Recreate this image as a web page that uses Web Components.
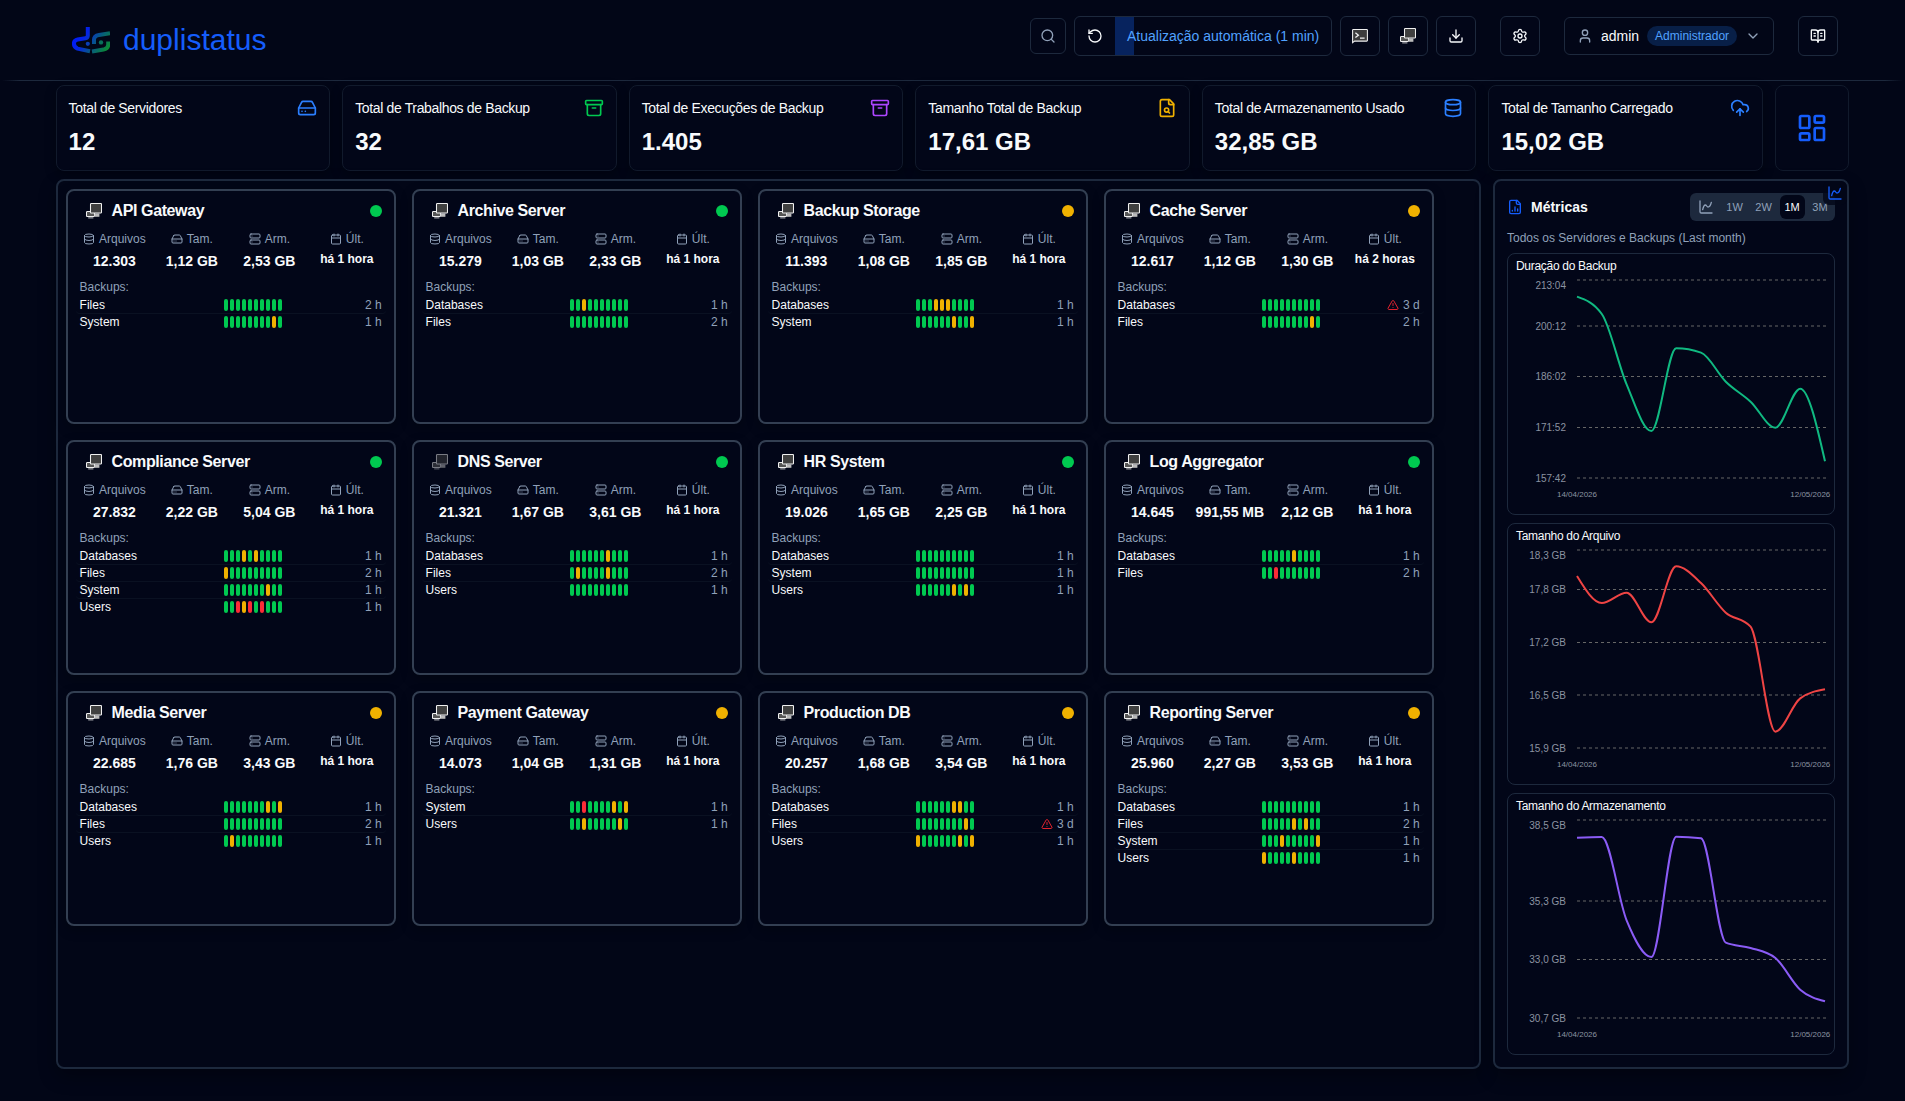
<!DOCTYPE html>
<html lang="pt-BR">
<head>
<meta charset="utf-8">
<title>duplistatus</title>
<style>
html,body{margin:0;height:100%;background:#020617}
body{font-family:"Liberation Sans",Arial,sans-serif;color:#f8fafc;overflow:hidden}
</style>
</head>
<body>
<dashboard-app></dashboard-app>
<script>
const ICONS = {
  search:'<circle cx="11" cy="11" r="8"/><path d="m21 21-4.3-4.3"/>',
  rotate:'<path d="M3 12a9 9 0 1 0 9-9 9.75 9.75 0 0 0-6.74 2.74L3 8"/><path d="M3 3v5h5"/>',
  download:'<path d="M12 15V3"/><path d="M21 15v4a2 2 0 0 1-2 2H5a2 2 0 0 1-2-2v-4"/><path d="m7 10 5 5 5-5"/>',
  settings:'<path d="M9.671 4.136a2.34 2.34 0 0 1 4.659 0 2.34 2.34 0 0 0 3.319 1.915 2.34 2.34 0 0 1 2.33 4.033 2.34 2.34 0 0 0 0 3.831 2.34 2.34 0 0 1-2.33 4.033 2.34 2.34 0 0 0-3.319 1.915 2.34 2.34 0 0 1-4.659 0 2.34 2.34 0 0 0-3.32-1.915 2.34 2.34 0 0 1-2.33-4.033 2.34 2.34 0 0 0 0-3.831A2.34 2.34 0 0 1 6.35 6.051a2.34 2.34 0 0 0 3.319-1.915"/><circle cx="12" cy="12" r="3"/>',
  user:'<path d="M19 21v-2a4 4 0 0 0-4-4H9a4 4 0 0 0-4 4v2"/><circle cx="12" cy="7" r="4"/>',
  chevron:'<path d="m6 9 6 6 6-6"/>',
  book:'<path d="M12 7v14"/><path d="M16 12h2"/><path d="M16 8h2"/><path d="M3 18a1 1 0 0 1-1-1V4a1 1 0 0 1 1-1h5a4 4 0 0 1 4 4 4 4 0 0 1 4-4h5a1 1 0 0 1 1 1v13a1 1 0 0 1-1 1h-6a3 3 0 0 0-3 3 3 3 0 0 0-3-3z"/><path d="M6 12h2"/><path d="M6 8h2"/>',
  drive:'<path d="M22 12H2"/><path d="M5.45 5.11 2 12v6a2 2 0 0 0 2 2h16a2 2 0 0 0 2-2v-6l-3.45-6.89A2 2 0 0 0 16.76 4H7.24a2 2 0 0 0-1.79 1.11z"/><path d="M6 16h.01"/><path d="M10 16h.01"/>',
  archive:'<rect width="20" height="5" x="2" y="3" rx="1"/><path d="M4 8v11a2 2 0 0 0 2 2h12a2 2 0 0 0 2-2V8"/><path d="M10 12h4"/>',
  filesearch:'<path d="M15 2H6a2 2 0 0 0-2 2v16a2 2 0 0 0 2 2h12a2 2 0 0 0 2-2V7Z"/><path d="M14 2v4a2 2 0 0 0 2 2h4"/><circle cx="11.5" cy="14.5" r="2.5"/><path d="M13.3 16.3 15 18"/>',
  database:'<ellipse cx="12" cy="5" rx="9" ry="3"/><path d="M3 5v14a9 3 0 0 0 18 0V5"/><path d="M3 12a9 3 0 0 0 18 0"/>',
  upload:'<path d="M12 13v8"/><path d="M4 14.899A7 7 0 1 1 15.71 8h1.79a4.5 4.5 0 0 1 2.5 8.242"/><path d="m8 17 4-4 4 4"/>',
  dashboard:'<rect width="7" height="9" x="3" y="3" rx="1"/><rect width="7" height="5" x="14" y="3" rx="1"/><rect width="7" height="9" x="14" y="12" rx="1"/><rect width="7" height="5" x="3" y="16" rx="1"/>',
  server:'<rect width="20" height="8" x="2" y="2" rx="2"/><rect width="20" height="8" x="2" y="14" rx="2"/><path d="M6 6h.01"/><path d="M6 18h.01"/>',
  calendar:'<path d="M8 2v4"/><path d="M16 2v4"/><rect width="18" height="18" x="3" y="4" rx="2"/><path d="M3 10h18"/>',
  alert:'<path d="m21.73 18-8-14a2 2 0 0 0-3.48 0l-8 14A2 2 0 0 0 4 21h16a2 2 0 0 0 1.73-3"/><path d="M12 9v4"/><path d="M12 17h.01"/>',
  filechart:'<path d="M15 2H6a2 2 0 0 0-2 2v16a2 2 0 0 0 2 2h12a2 2 0 0 0 2-2V7Z"/><path d="M14 2v4a2 2 0 0 0 2 2h4"/><path d="M8 18v-1"/><path d="M12 18v-6"/><path d="M16 18v-3"/>',
  spline:'<path d="M3 3v16a2 2 0 0 0 2 2h16"/><path d="M7 16c.5-2 1.5-7 4-7 2 0 2 3 4 3 2.5 0 4.5-5 5-7"/>'
};
// Two-tone glyphs on a 16-unit grid
const TONED = {
  monitors:'<rect x=".5" y="8.5" width="8" height="5" rx=".8" fill="#555"/><path d="M2.2 14.9h5.2" stroke-width=".8"/><rect x="8.6" y="10.5" width="4.8" height="3.3" fill="#bbb" stroke="none"/><rect x="4.5" y=".5" width="11" height="9.5" rx=".8" fill="#404040"/>',
  terminal:'<path d="M.6 14.6V2Q.6 1.4 1.3 1.4H14.7Q15.4 1.4 15.4 2V12.5Q15.4 13.1 14.7 13.1H2.6L.6 14.6z" fill="#3c3c3c"/><path d="M3.4 4.8l3 2.4-3 2.4M8 10.2h4.6" fill="none" stroke-width="1.3"/>'
};

class DsIcon extends HTMLElement{
  connectedCallback(){
    const n=this.getAttribute('name'), s=this.getAttribute('size')||16;
    const svg=TONED[n]
      ? `<svg width="${s}" height="${s}" viewBox="0 0 16 16" stroke="#f0f0f0" stroke-width="1.05">${TONED[n]}</svg>`
      : `<svg width="${s}" height="${s}" viewBox="0 0 24 24" fill="none" stroke="currentColor" stroke-width="2" stroke-linecap="round" stroke-linejoin="round">${ICONS[n]}</svg>`;
    this.attachShadow({mode:'open'}).innerHTML=`<style>:host{display:block;flex:none;width:${s}px;height:${s}px}svg{display:block}</style>${svg}`;
  }
}
customElements.define('ds-icon',DsIcon);

class IconButton extends HTMLElement{
  connectedCallback(){
    this.attachShadow({mode:'open'}).innerHTML=`<style>
    :host{display:flex;align-items:center;justify-content:center;box-sizing:border-box;width:40px;height:40px;border:1px solid #1d293d;border-radius:6px;background:#020618;flex:none}
    </style><slot></slot>`;
  }
}
customElements.define('icon-button',IconButton);

class AppLogo extends HTMLElement{
  connectedCallback(){
    this.attachShadow({mode:'open'}).innerHTML=`<style>
    :host{display:flex;align-items:center;gap:13px}
    svg{display:block}
    span{font-size:30px;line-height:36px;color:#155dfc}
    </style>
    <svg width="38" height="27" viewBox="0 0 38 27">
      <defs><linearGradient id="g" gradientUnits="userSpaceOnUse" x1="4" y1="4" x2="36" y2="24"><stop offset="0" stop-color="#0018ff"/><stop offset=".3" stop-color="#0526e0"/><stop offset=".62" stop-color="#075a80"/><stop offset="1" stop-color="#0b8f2c"/></linearGradient></defs>
      <g fill="none" stroke="url(#g)" stroke-width="4">
        <path d="M15.8 0V8.4Q15.8 10.8 13.4 11.2L5.6 12.5Q1.9 13.2 1.9 16.6T5.6 21.6L18 24.2"/>
        <path d="M38 6.2L27 7.9Q22 8.7 22 12.6V17"/>
        <path d="M20 24.4L31.5 22.6Q36.2 21.7 36.2 17.6V14.6"/>
      </g>
      <circle cx="15.8" cy="16.8" r="2.1" fill="#0a3fb8"/><circle cx="29" cy="15.4" r="2.2" fill="#08705a"/>
    </svg><span>duplistatus</span>`;
  }
}
customElements.define('app-logo',AppLogo);

class AppHeader extends HTMLElement{
  connectedCallback(){
    this.attachShadow({mode:'open'}).innerHTML=`<style>
    :host{display:block}
    header{display:flex;justify-content:space-between;align-items:flex-start;height:80px;padding:0 67px 0 72px}
    app-logo{height:80px}
    .tools{display:flex;align-items:center;height:72px;gap:8px}
    .rule{height:1px;background:linear-gradient(90deg,transparent 2px,#1d293d 20px,#1d293d calc(100% - 20px),transparent calc(100% - 2px))}
    .small{width:36px;height:36px;color:#90a1b9}
    .refresh{display:flex;box-sizing:border-box;width:258px;height:40px;border:1px solid #1d293d;border-radius:6px;overflow:hidden;background:#020618}
    .go{width:40px;display:flex;align-items:center;justify-content:center}
    .auto{flex:1;display:flex;align-items:center;padding-left:12px;font-size:14px;color:#51a2ff;white-space:nowrap;background:linear-gradient(#07235e,#07235e) 0 0/19px 100% no-repeat}
    .set,.doc,.user{margin-left:16px}
    .user{display:flex;align-items:center;gap:8px;box-sizing:border-box;width:210px;height:38px;padding:0 12px;border:1px solid #1d293d;border-radius:6px;font-size:14px}
    .user ds-icon{color:#90a1b9}
    .badge{flex:1;text-align:center;height:20px;line-height:20px;border-radius:10px;background:#081f47;color:#51a2ff;font-size:12px}
    </style>
    <header><app-logo></app-logo>
      <div class="tools">
        <icon-button class="small"><ds-icon name="search"></ds-icon></icon-button>
        <div class="refresh"><div class="go"><ds-icon name="rotate"></ds-icon></div><div class="auto">Atualização automática (1 min)</div></div>
        <icon-button><ds-icon name="terminal"></ds-icon></icon-button>
        <icon-button><ds-icon name="monitors"></ds-icon></icon-button>
        <icon-button><ds-icon name="download"></ds-icon></icon-button>
        <icon-button class="set"><ds-icon name="settings"></ds-icon></icon-button>
        <div class="user"><ds-icon name="user"></ds-icon><span>admin</span><span class="badge">Administrador</span><ds-icon name="chevron"></ds-icon></div>
        <icon-button class="doc"><ds-icon name="book"></ds-icon></icon-button>
      </div>
    </header><div class="rule"></div>`;
  }
}
customElements.define('app-header',AppHeader);

class StatCard extends HTMLElement{
  connectedCallback(){
    this.attachShadow({mode:'open'}).innerHTML=`<style>
    :host{display:block;box-sizing:border-box;height:86px;padding:12px;border:1px solid #111a2c;border-radius:8px;background:#020618;box-shadow:0 4px 12px rgba(0,0,0,.3)}
    .top{display:flex;justify-content:space-between;height:20px;margin-bottom:8px}
    .label{font-size:14px;line-height:20px;letter-spacing:-.35px;white-space:nowrap}
    .value{font-size:24px;line-height:32px;font-weight:700}
    ds-icon{color:${this.getAttribute('tint')}}
    </style>
    <div class="top"><span class="label"><slot></slot></span><ds-icon name="${this.getAttribute('icon')}" size="20"></ds-icon></div>
    <div class="value">${this.getAttribute('value')}</div>`;
  }
}
customElements.define('stat-card',StatCard);

// One small bar per recent backup: g = success, y = warning, r = error
class StatusBars extends HTMLElement{
  connectedCallback(){
    this.attachShadow({mode:'open'}).innerHTML=`<style>
    :host{display:flex;gap:2px}
    i{width:4px;height:12px;border-radius:2px;background:#00c950}
    .y{background:#f0b100}.r{background:#fb2c36}
    </style>${[...this.getAttribute('runs')].map(c=>`<i class="${c}"></i>`).join('')}`;
  }
}
customElements.define('status-bars',StatusBars);

class ServerCard extends HTMLElement{
  set data(d){
    const [name,tone,files,size,stored,last,rows,dim]=d;
    const stat=(icon,label,val,cls='')=>`<div class="stat"><div class="lab"><ds-icon name="${icon}" size="12"></ds-icon><span>${label}</span></div><div class="val ${cls}">${val}</div></div>`;
    this.attachShadow({mode:'open'}).innerHTML=`<style>
    :host{display:block;box-sizing:border-box;width:330px;height:235px;padding:8px 12px 0;border:2px solid #333f52;border-radius:8px;background:#020618;box-shadow:0 4px 12px rgba(0,0,0,.25)}
    .head{display:flex;align-items:center;height:24px;padding-left:6px;margin-bottom:8px}
    .head ds-icon{margin-right:10px;${dim?'opacity:.5':''}}
    .name{flex:1;font-size:16px;font-weight:700;letter-spacing:-.4px;line-height:24px}
    .dot{width:12px;height:12px;border-radius:50%;background:${tone==='g'?'#00c950':'#f0b100'}}
    .stats{display:grid;grid-template-columns:repeat(4,1fr);gap:8px;height:40px}
    .lab{display:flex;gap:4px;align-items:center;justify-content:center;height:16px;font-size:12px;line-height:16px;color:#90a1b9}
    .val{font-size:14px;font-weight:700;line-height:20px;text-align:center;white-space:nowrap;margin:4px -8px 0}
    .val.last{font-size:12px;line-height:16px;margin-top:4px}
    .sub{font-size:12px;line-height:16px;margin-top:8px;height:18px;color:#90a1b9}
    .row{display:grid;grid-template-columns:144px 58px 1fr;align-items:center;height:16px;margin:0 -4px;padding:0 4px;border-bottom:1px solid #0a1122;border-radius:4px;font-size:12px;line-height:16px}
    .row:last-child{border-bottom:0}
    .time{display:flex;justify-content:flex-end;align-items:center;gap:4px;color:#90a1b9}
    .time ds-icon{color:#e0232f}
    </style>
    <div class="head"><ds-icon name="monitors"></ds-icon><span class="name">${name}</span><span class="dot"></span></div>
    <div class="stats">${stat('database','Arquivos',files)}${stat('drive','Tam.',size)}${stat('server','Arm.',stored)}${stat('calendar','Últ.',last,'last')}</div>
    <div class="sub">Backups:</div>
    <div>${rows.map(([n,b,t])=>`<div class="row"><span>${n}</span><status-bars runs="${b}"></status-bars><span class="time">${t==='3 d'?'<ds-icon name="alert" size="12"></ds-icon>':''}<span>${t}</span></span></div>`).join('')}</div>`;
  }
}
customElements.define('server-card',ServerCard);

// Monotone cubic interpolation through the points
function monotone(p){
  const n=p.length,m=[],s=[];
  for(let i=0;i<n-1;i++)s.push((p[i+1][1]-p[i][1])/(p[i+1][0]-p[i][0]));
  for(let i=1;i<n-1;i++){
    const h0=p[i][0]-p[i-1][0],h1=p[i+1][0]-p[i][0],a=s[i-1],b=s[i],q=(a*h1+b*h0)/(h0+h1);
    m[i]=(Math.sign(a)+Math.sign(b))*Math.min(Math.abs(a),Math.abs(b),.5*Math.abs(q))||0;
  }
  m[0]=(3*s[0]-m[1])/2; m[n-1]=(3*s[n-2]-m[n-2])/2;
  let d=`M${p[0]}`;
  for(let i=0;i<n-1;i++){const h=(p[i+1][0]-p[i][0])/3;d+=`C${p[i][0]+h},${p[i][1]+h*m[i]} ${p[i+1][0]-h},${p[i+1][1]-h*m[i+1]} ${p[i+1]}`;}
  return d;
}
class MetricChart extends HTMLElement{
  set data({title,color,ticks,ys}){
    const pts=ys.map((y,i)=>[70+i*24.8,y]);
    this.attachShadow({mode:'open'}).innerHTML=`<style>
    :host{display:block;box-sizing:border-box;height:262px;border:1px solid #1d293d;border-radius:8px;padding-top:4px}
    .t{font-size:12px;line-height:16px;letter-spacing:-.3px;padding-left:8px}
    svg{display:block}
    text{font-family:"Liberation Sans",Arial,sans-serif;font-size:10px;fill:#8b93a1}
    .x{font-size:8px;text-anchor:middle}.y{text-anchor:end}
    </style><div class="t">${title}</div>
    <svg width="326" height="240" viewBox="1 21 326 240">
    ${ticks.map(([l,y],i)=>`<path d="M70 ${y}H319" stroke="#666" stroke-dasharray="3 3"/><text class="y" x="59" y="${(i?y:32)+3.6}">${l}</text>`).join('')}
    <text class="x" x="70" y="243.7">14/04/2026</text><text class="x" x="303.3" y="243.7">12/05/2026</text>
    <path d="${monotone(pts)}" fill="none" stroke="${color}" stroke-width="2"/></svg>`;
  }
}
customElements.define('metric-chart',MetricChart);

class MetricsPanel extends HTMLElement{
  connectedCallback(){
    const r=this.attachShadow({mode:'open'});
    r.innerHTML=`<style>
    :host{display:block;position:relative;box-sizing:border-box;width:356px;height:890px;padding:12px;border:2px solid #1d293d;border-radius:8px;background:#020618;box-shadow:0 8px 18px rgba(0,0,0,.3)}
    .head{display:flex;align-items:center;height:28px}
    .head>ds-icon{color:#155dfc;margin-right:8px}
    h2{flex:1;margin:0;font-size:14px;line-height:20px}
    .tabs{display:flex;align-items:center;gap:2.8px;box-sizing:border-box;width:145px;height:28px;padding-left:8px;border-radius:6px;background:#1d293d;color:#90a1b9;font-size:11px;overflow:hidden}
    .tabs ds-icon{margin-right:4.6px}
    .tabs span{height:24px;line-height:24px;padding:0 4.9px;border-radius:6px;white-space:nowrap}
    .tabs .on{background:#020618;color:#f8fafc}
    .sub{font-size:12px;line-height:16px;color:#90a1b9;margin:9px 0 7px}
    .list{display:flex;flex-direction:column;gap:8px}
    .float{position:absolute;top:0;right:0;width:24px;height:24px;display:flex;align-items:center;justify-content:center;border-radius:6px;background:rgba(2,6,24,.8);color:#155dfc}
    </style>
    <div class="head"><ds-icon name="filechart"></ds-icon><h2>Métricas</h2>
      <div class="tabs"><ds-icon name="spline"></ds-icon><span>1W</span><span>2W</span><span class="on">1M</span><span>3M</span></div></div>
    <div class="sub">Todos os Servidores e Backups (Last month)</div>
    <div class="list"></div>
    <div class="float"><ds-icon name="spline"></ds-icon></div>`;
    const o1=v=>v.map(y=>y/3-83), o2=v=>v.map(y=>y/3-13);
    [
      {title:'Duração do Backup',color:'#10b981',ticks:[['213:04',27],['200:12',73],['186:02',123.5],['171:52',174.5],['157:42',225]],ys:o1([380,432,643,783,535,548,635,695,773,656,874])},
      {title:'Tamanho do Arquivo',color:'#ef4444',ticks:[['18,3 GB',27],['17,8 GB',66.5],['17,2 GB',119.5],['16,5 GB',172],['15,9 GB',225]],ys:o2([198,279,248,337,169,219,308,350,665,565,538])},
      {title:'Tamanho do Armazenamento',color:'#8b5cf6',ticks:[['38,5 GB',27],['35,3 GB',108],['33,0 GB',166.5],['30,7 GB',225]],ys:o2([173,171,421,531,170,175,488,504,534,629,664])}
    ].forEach(d=>{const c=document.createElement('metric-chart');c.data=d;r.querySelector('.list').append(c)});
  }
}
customElements.define('metrics-panel',MetricsPanel);

const H='há 1 hora', G='gggggggggg';
const SERVERS=[
 ['API Gateway','g','12.303','1,12 GB','2,53 GB',H,[['Files',G,'2 h'],['System','ggggggggyg','1 h']]],
 ['Archive Server','g','15.279','1,03 GB','2,33 GB',H,[['Databases','ggyggggggg','1 h'],['Files',G,'2 h']]],
 ['Backup Storage','y','11.393','1,08 GB','1,85 GB',H,[['Databases','gggyyygggg','1 h'],['System','ggggggyggy','1 h']]],
 ['Cache Server','y','12.617','1,12 GB','1,30 GB','há 2 horas',[['Databases',G,'3 d'],['Files','ggggggggyg','2 h']]],
 ['Compliance Server','g','27.832','2,22 GB','5,04 GB',H,[['Databases','gggygygggg','1 h'],['Files','yggggggggg','2 h'],['System','gggggggygg','1 h'],['Users','ggryrgrggg','1 h']]],
 ['DNS Server','g','21.321','1,67 GB','3,61 GB',H,[['Databases','ggggggyggg','1 h'],['Files','gyggggyggg','2 h'],['Users',G,'1 h']],true],
 ['HR System','g','19.026','1,65 GB','2,25 GB',H,[['Databases',G,'1 h'],['System',G,'1 h'],['Users','ggggggygyg','1 h']]],
 ['Log Aggregator','g','14.645','991,55 MB','2,12 GB',H,[['Databases','gggggygggg','1 h'],['Files','ggrggggggg','2 h']]],
 ['Media Server','y','22.685','1,76 GB','3,43 GB',H,[['Databases','gggggggygy','1 h'],['Files',G,'2 h'],['Users','gygggggggg','1 h']]],
 ['Payment Gateway','y','14.073','1,04 GB','1,31 GB',H,[['System','ggrggggygy','1 h'],['Users','ggygggggyg','1 h']]],
 ['Production DB','y','20.257','1,68 GB','3,54 GB',H,[['Databases','ggggggyygg','1 h'],['Files','ggggggggyg','3 d'],['Users','yggggggygy','1 h']]],
 ['Reporting Server','y','25.960','2,27 GB','3,53 GB',H,[['Databases',G,'1 h'],['Files','gggggygygg','2 h'],['System','gggygggggy','1 h'],['Users','yggggygggg','1 h']]]
];
class DashboardApp extends HTMLElement{
  connectedCallback(){
    const r=this.attachShadow({mode:'open'});
    r.innerHTML=`<style>
    :host{display:block;height:1101px}
    main{padding:4px 56px 0 55.6px}
    .top{display:grid;grid-template-columns:repeat(6,1fr) 74px;gap:12px;margin-bottom:8px}
    .toggle{width:74px;height:86px;border-color:#111a2c;border-radius:8px;color:#155dfc}
    .body{display:flex;gap:12px}
    .panel{flex:1;box-sizing:border-box;height:890px;padding:8px;border:2px solid #1d293d;border-radius:8px;background:#020617;box-shadow:0 8px 18px rgba(0,0,0,.3)}
    .grid{display:grid;grid-template-columns:repeat(4,330px);gap:16px}
    </style>
    <app-header></app-header>
    <main>
      <div class="top">
        <stat-card icon="drive" tint="#2b7fff" value="12">Total de Servidores</stat-card>
        <stat-card icon="archive" tint="#00c950" value="32">Total de Trabalhos de Backup</stat-card>
        <stat-card icon="archive" tint="#ad46ff" value="1.405">Total de Execuções de Backup</stat-card>
        <stat-card icon="filesearch" tint="#f0b100" value="17,61 GB">Tamanho Total de Backup</stat-card>
        <stat-card icon="database" tint="#2b7fff" value="32,85 GB">Total de Armazenamento Usado</stat-card>
        <stat-card icon="upload" tint="#2b7fff" value="15,02 GB">Total de Tamanho Carregado</stat-card>
        <icon-button class="toggle"><ds-icon name="dashboard" size="32"></ds-icon></icon-button>
      </div>
      <div class="body"><div class="panel"><div class="grid"></div></div><metrics-panel></metrics-panel></div>
    </main>`;
    const g=r.querySelector('.grid');
    SERVERS.forEach(s=>{const c=document.createElement('server-card');c.data=s;g.append(c)});
  }
}
customElements.define('dashboard-app',DashboardApp);
</script>
</body>
</html>
